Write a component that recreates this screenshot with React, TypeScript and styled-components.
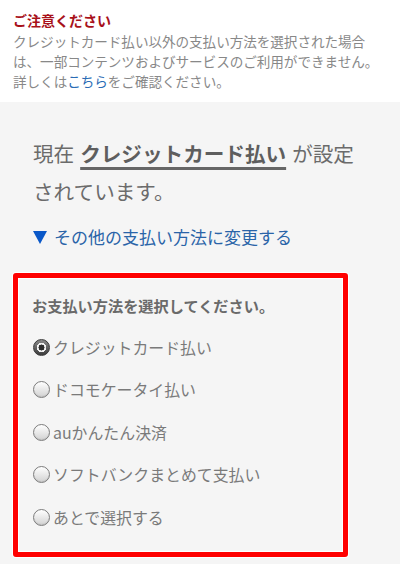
import styled, { createGlobalStyle } from 'styled-components'

const GlobalStyle = createGlobalStyle`
  html, body {
    margin: 0;
    padding: 0;
    background: #f5f5f5;
  }
  body {
    font-family: 'Noto Sans CJK JP', 'Noto Sans', sans-serif;
  }
`

const Page = styled.div`
  width: 400px;
  min-height: 564px;
  background: #f5f5f5;
  overflow: hidden;
`

const Notice = styled.div`
  background: #ffffff;
  padding: 9px 10px 10px 13px;
  height: 83px;
`

const NoticeTitle = styled.div`
  color: #a8111a;
  font-size: 14px;
  font-weight: 700;
  line-height: 22px;
`

const NoticeText = styled.p`
  margin: 0;
  color: #888888;
  font-size: 13.6px;
  line-height: 20px;
  letter-spacing: -0.05px;
`

const Link = styled.a`
  color: #2a6cb5;
  text-decoration: none;
`

const Main = styled.div`
  padding: 32px 0 0 33px;
`

const Current = styled.p`
  margin: 0;
  width: 334px;
  color: #6b6b6b;
  font-size: 20.6px;
  line-height: 38px;
`

const CurrentMethod = styled.strong`
  display: inline-block;
  font-weight: 700;
  color: #5e5e5e;
  margin: 0 6px;
  text-decoration: underline;
  text-decoration-thickness: 3px;
  text-underline-offset: 5px;
  text-decoration-color: #666666;
`

const ChangeLink = styled.a`
  display: flex;
  align-items: center;
  gap: 7px;
  margin-top: 15px;
  color: #2a64a8;
  font-size: 17px;
  line-height: 24px;
  text-decoration: none;
`

const Triangle = styled.span`
  width: 0;
  height: 0;
  border-left: 7px solid transparent;
  border-right: 7px solid transparent;
  border-top: 13px solid #0a58c8;
  margin-top: 1px;
`

const SelectBox = styled.div`
  margin: 24px 0 0 -20px;
  width: 335px;
  height: 284px;
  box-sizing: border-box;
  border: 5px solid #ff0000;
  border-radius: 3px;
  box-shadow: inset 0 0 0 1px #ffffff, 0 0 0 1px #ffffff;
  padding: 6px 14px 0 14px;
`

const SelectTitle = styled.div`
  color: #6a6a6a;
  font-size: 15.2px;
  font-weight: 700;
  line-height: 42px;
`

const RadioRow = styled.label`
  display: flex;
  align-items: center;
  height: 42.5px;
  color: #7a7a7a;
  font-size: 15.9px;
`

const Radio = styled.span<{ checked?: boolean }>`
  width: 17px;
  height: 17px;
  margin-left: 1px;
  margin-right: 3px;
  flex-shrink: 0;
  box-sizing: border-box;
  border-radius: 50%;
  border: 1px solid ${p => (p.checked ? '#3a3a3a' : '#7c7c7c')};
  background: ${p =>
    p.checked
      ? 'radial-gradient(circle, #2d2d2d 0 2.8px, #f2f2f2 3.2px 4.6px, transparent 5px), linear-gradient(#8a8a8a, #3c3c3c)'
      : 'linear-gradient(#ffffff, #d2d2d2)'};
  box-shadow: ${p => (p.checked ? 'none' : 'inset 0 -1px 1px rgba(0,0,0,0.08)')};
`

const methods = [
  'クレジットカード払い',
  'ドコモケータイ払い',
  'auかんたん決済',
  'ソフトバンクまとめて支払い',
  'あとで選択する',
]

export default function App() {
  return (
    <Page>
      <GlobalStyle />
      <Notice>
        <NoticeTitle>ご注意ください</NoticeTitle>
        <NoticeText>
          クレジットカード払い以外の支払い方法を選択された場合は、一部コンテンツおよびサービスのご利用ができません。
          <br />
          詳しくは<Link>こちら</Link>をご確認ください。
        </NoticeText>
      </Notice>
      <Main>
        <Current>
          現在<CurrentMethod>クレジットカード払い</CurrentMethod>が設定されています。
        </Current>
        <ChangeLink>
          <Triangle />
          その他の支払い方法に変更する
        </ChangeLink>
        <SelectBox>
          <SelectTitle>お支払い方法を選択してください。</SelectTitle>
          {methods.map((m, i) => (
            <RadioRow key={m}>
              <Radio checked={i === 0} />
              {m}
            </RadioRow>
          ))}
        </SelectBox>
      </Main>
    </Page>
  )
}
